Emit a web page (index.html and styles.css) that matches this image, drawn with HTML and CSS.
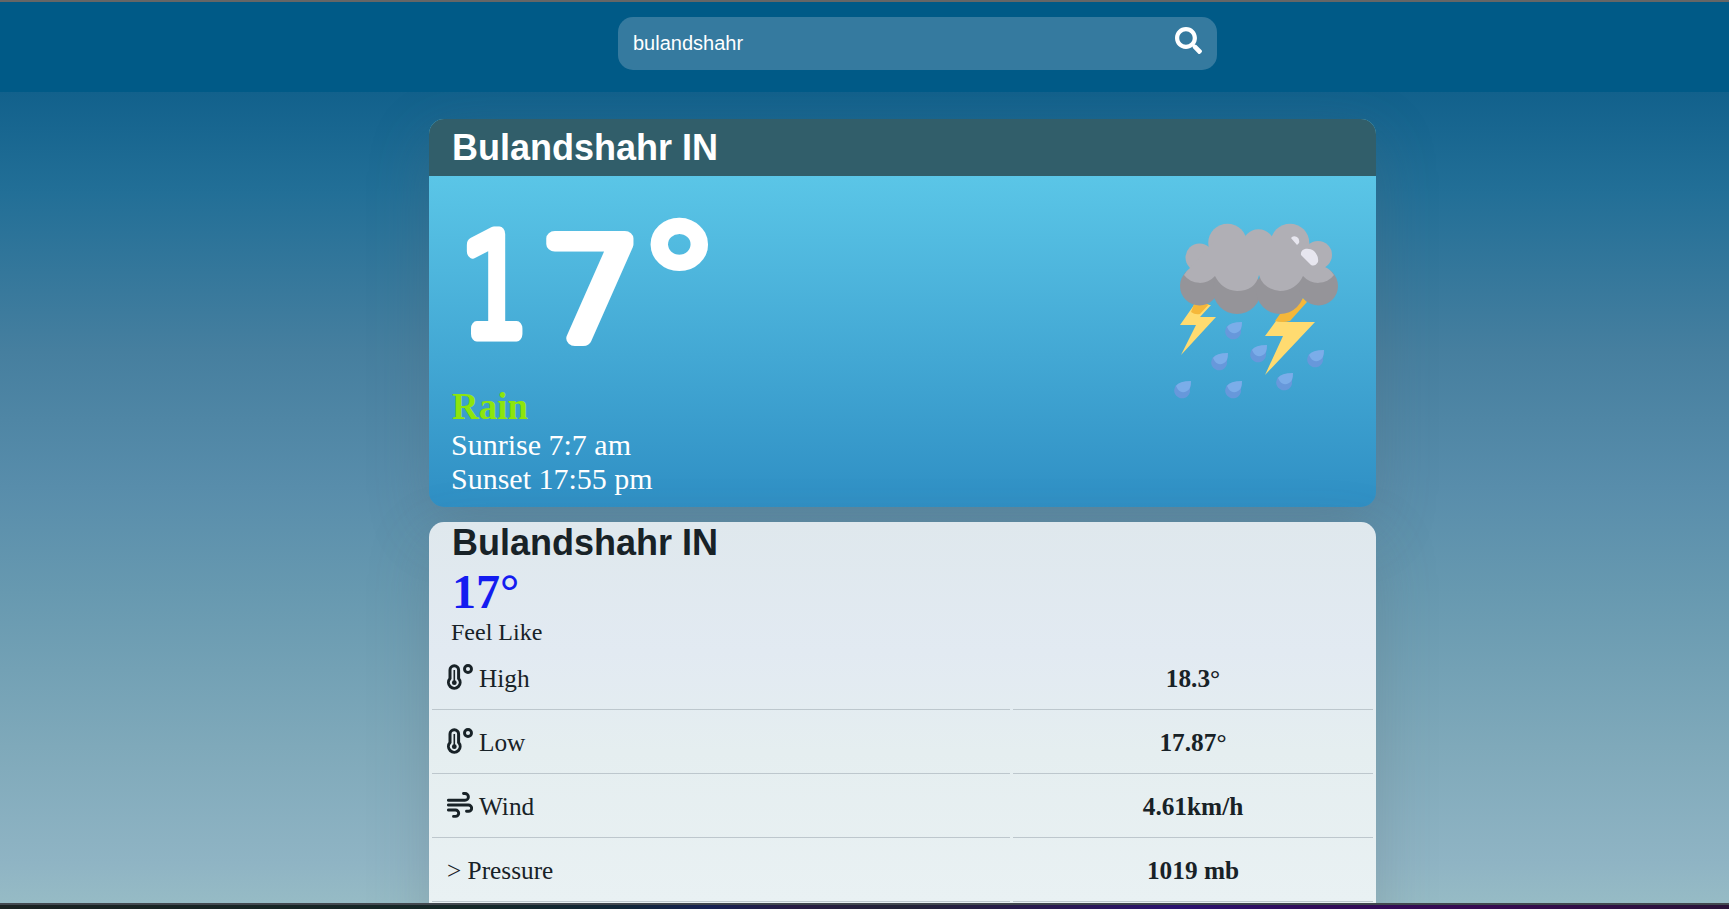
FILE: index.html
```html
<!DOCTYPE html>
<html lang="en">
<head>
<meta charset="utf-8">
<title>Weather</title>
<link rel="stylesheet" href="styles.css">
</head>
<body>
<div class="app">
  <header class="topbar">
    <form class="search">
      <span class="query">bulandshahr</span>
      <svg class="search-icon" viewBox="0 0 512 512"><path fill="#fff" d="M505 442.700 405.300 343c-4.500-4.500-10.600-7-17-7H372c27.600-35.300 44-79.700 44-128C416 93.100 322.900 0 208 0S0 93.100 0 208s93.100 208 208 208c48.300 0 92.700-16.400 128-44v16.300c0 6.400 2.500 12.500 7 17l99.700 99.700c9.400 9.400 24.600 9.400 33.900 0l28.300-28.300c9.400-9.400 9.400-24.600.1-34zM208 336c-70.700 0-128-57.200-128-128 0-70.700 57.200-128 128-128 70.700 0 128 57.200 128 128 0 70.700-57.200 128-128 128z"/></svg>
    </form>
  </header>
  <main class="content">
    <section class="today">
      <h1 class="city city-bar">Bulandshahr IN</h1>
      <div class="today-body">
        <svg class="temperature" viewBox="0 0 270 180">
          <g class="digits">
            <text transform="translate(9 134) scale(.780 1)">1</text>
            <text transform="translate(90 139) scale(1.150 1)">7</text>
            <text class="degree" transform="translate(184 137.500) scale(.990 .920)">°</text>
          </g>
        </svg>
        <svg class="storm" viewBox="0 0 230 210">
          <path fill="#ffdb70" d="M44 105H61L50 117H66L31 155 46 125H30zM138 122H165L115 175 133 136H115L126 121z"/>
          <path fill="#f5b73a" d="M44 104H59L61 102 50 114Q45 115 41 112zM130 114 153 98 157 102 140 121Q133 123 125 121z"/>
          <g fill="#959499"><circle cx="49.500" cy="86" r="19.500"/><circle cx="87" cy="90" r="24"/><circle cx="130" cy="90" r="24"/><circle cx="168.500" cy="86" r="19.500"/></g>
          <g fill="#b0afb5">
            <circle cx="77.500" cy="43" r="19.300"/><circle cx="108.500" cy="45.500" r="16.200"/><circle cx="140" cy="43" r="19.300"/><circle cx="49.500" cy="57.500" r="14"/><circle cx="168" cy="55" r="14"/>
            <path d="M34 75Q36 71 40 68L50 57 65 40H155L168 55 175 67Q180 69 184 75A20 20 0 0 1 153 76C149 85 140 91 130 91Q113 89 109 75Q105 91 87 91Q72 90 65 76A20 20 0 0 1 34 75z"/>
          </g>
          <path fill="#e7e6ef" d="M141 38Q143 35 147 37Q150 39 149 43L147 45zM151 55C150 48 159 47 164 51Q169 56 168 62Q165 67 161 65z"/>
          <g transform="translate(0 -1)">
            <g id="drop"><path fill="#6798db" d="M77 127Q74 132 76 136A8 8 0 0 0 91 131L92 124z"/><path fill="#7bade9" d="M77 128Q80 123 92 123Q92 131 88 133Q81 137 77 128z"/></g>
            <use href="#drop" x="25" y="23"/><use href="#drop" x="-14" y="31"/><use href="#drop" x="82" y="28"/><use href="#drop" x="51" y="51"/><use href="#drop" y="59"/><use href="#drop" x="-51" y="59"/>
          </g>
        </svg>
      </div>
      <div class="summary">
        <h2 class="condition">Rain</h2>
        <p>Sunrise 7:7 am</p>
        <p>Sunset 17:55 pm</p>
      </div>
    </section>
    <section class="details">
      <div class="details-head">
        <h1 class="city">Bulandshahr IN</h1>
        <h2 class="feels">17°</h2>
        <p class="feels-label">Feel Like</p>
      </div>
      <div class="grid">
        <div class="label"><svg class="icon" viewBox="0 0 26 26"><g fill="none" stroke="#182227"><path stroke-width="3" d="M3 6a4.300 4.300 0 0 1 8.600 0v8.500a5.800 5.800 0 1 1-8.600 0z"/><path stroke-width="1.600" d="M7.300 6v12"/><circle cx="21" cy="5" r="3.500" stroke-width="2.900"/></g><circle cx="7.300" cy="18.700" r="2.400" fill="#182227"/></svg>High</div><div class="value">18.3°</div>
        <div class="label"><svg class="icon" viewBox="0 0 26 26"><g fill="none" stroke="#182227"><path stroke-width="3" d="M3 6a4.300 4.300 0 0 1 8.600 0v8.500a5.800 5.800 0 1 1-8.600 0z"/><path stroke-width="1.600" d="M7.300 6v12"/><circle cx="21" cy="5" r="3.500" stroke-width="2.900"/></g><circle cx="7.300" cy="18.700" r="2.400" fill="#182227"/></svg>Low</div><div class="value">17.87°</div>
        <div class="label"><svg class="icon" viewBox="0 0 26 26"><path fill="none" stroke="#182227" stroke-width="2.900" stroke-linecap="round" d="M1.400 8.300H18a3.400 3.400 0 0 0 0-6.800H16.500M1.400 13H21.500a3.100 3.100 0 0 1 0 6.300H19.500M1.400 18H8.500a3.200 3.200 0 0 1 0 6.400H6.500"/></svg>Wind</div><div class="value">4.61km/h</div>
        <div class="label">&gt; Pressure</div><div class="value">1019 mb</div>
      </div>
    </section>
  </main>
  <footer class="edge"></footer>
</div>
</body>
</html>
```
FILE: styles.css
```css
* { box-sizing: border-box; }
body { margin: 0; overflow: hidden; font-family: "Liberation Serif", serif; }
h1, h2, p, form { margin: 0; }
.app { height: 909px; display: flex; flex-direction: column; background: #005a87; border-top: 2px solid #666; }
.topbar { flex: none; height: 90px; padding: 15px 512px 0 618px; background: #005a87; }
.search { height: 53px; padding: 0 15px 0 15px; display: flex; justify-content: space-between; border-radius: 15px; background: #357a9f; color: #fff; }
.query { font: 20px/53px "Liberation Sans", sans-serif; }
.search-icon { width: 27px; height: 27px; margin-top: 10px; }
.content { height: 811px; padding: 27px 353px 0 429px; display: flex; flex-direction: column; gap: 15px; overflow: hidden; background: linear-gradient(#12618c 0, #226f97 100px, #467f9f 260px, #588dab 395px, #6799b0 500px, #7fa9ba 655px, #8fb4c4 770px, #96bbc5 811px); }
.today { flex: none; height: 388px; border-radius: 15px; overflow: hidden; color: #fff; background: linear-gradient(#62cfed, #2f8fc4); box-shadow: 0 20px 60px rgba(90,100,110,.26); }
.city { font: bold 36px/43px "Liberation Sans", sans-serif; }
.city-bar { height: 57px; padding: 7px 23px; background: #315e6a; }
.today-body { height: 209px; display: flex; justify-content: space-between; padding: 24px 0 0 23px; }
.temperature { width: 270px; height: 180px; overflow: visible; }
.digits { fill: #fff; stroke: #fff; stroke-width: 15px; stroke-linejoin: round; font: 200 137px "DejaVu Sans", sans-serif; }
.degree { font-size: 175px; stroke-width: 11px; }
.storm { width: 230px; height: 210px; margin-right: -4px; }
.summary { padding: 0 22px; font-size: 30px; line-height: 34px; }
.condition { font-size: 37px; line-height: 43px; padding-left: 1px; color: #8de50d; }
.details { flex: none; height: 500px; border-radius: 15px; color: #182227; background: linear-gradient(#dfe8ed, #e2eaf2 130px, #e5eef0 230px, #e9f1f3 380px); box-shadow: 0 20px 60px rgba(90,100,110,.26); }
.details-head { padding: 0 22px; height: 124px; }
.details .city { line-height: 42px; padding-left: 1px; }
.feels { font-size: 48px; line-height: 56px; padding-left: 1px; color: #141cf0; }
.feels-label { font-size: 24px; line-height: 24px; }
.grid { display: grid; grid-template-columns: 578px 360px; column-gap: 3px; padding: 0 3px; }
.label, .value { height: 64px; padding: 1px 15px 0; font-size: 25.3px; line-height: 62px; border-bottom: 1px solid #bdc7cd; }
.value { text-align: center; font-weight: bold; }
.label { display: flex; align-items: center; }
.icon { width: 26px; height: 26px; margin: -2px 6px 0 0; }
.edge { flex: none; height: 6px; border-top: 2px solid #42484f; background: linear-gradient(90deg, #1a2222 0, #142727 27%, #102637 36%, #152052 41%, #271b43 46%, #222336 52%, #291754 62%, #2a1170 68%, #300b59 76%, #360a51 86%, #291338 100%); }
```
